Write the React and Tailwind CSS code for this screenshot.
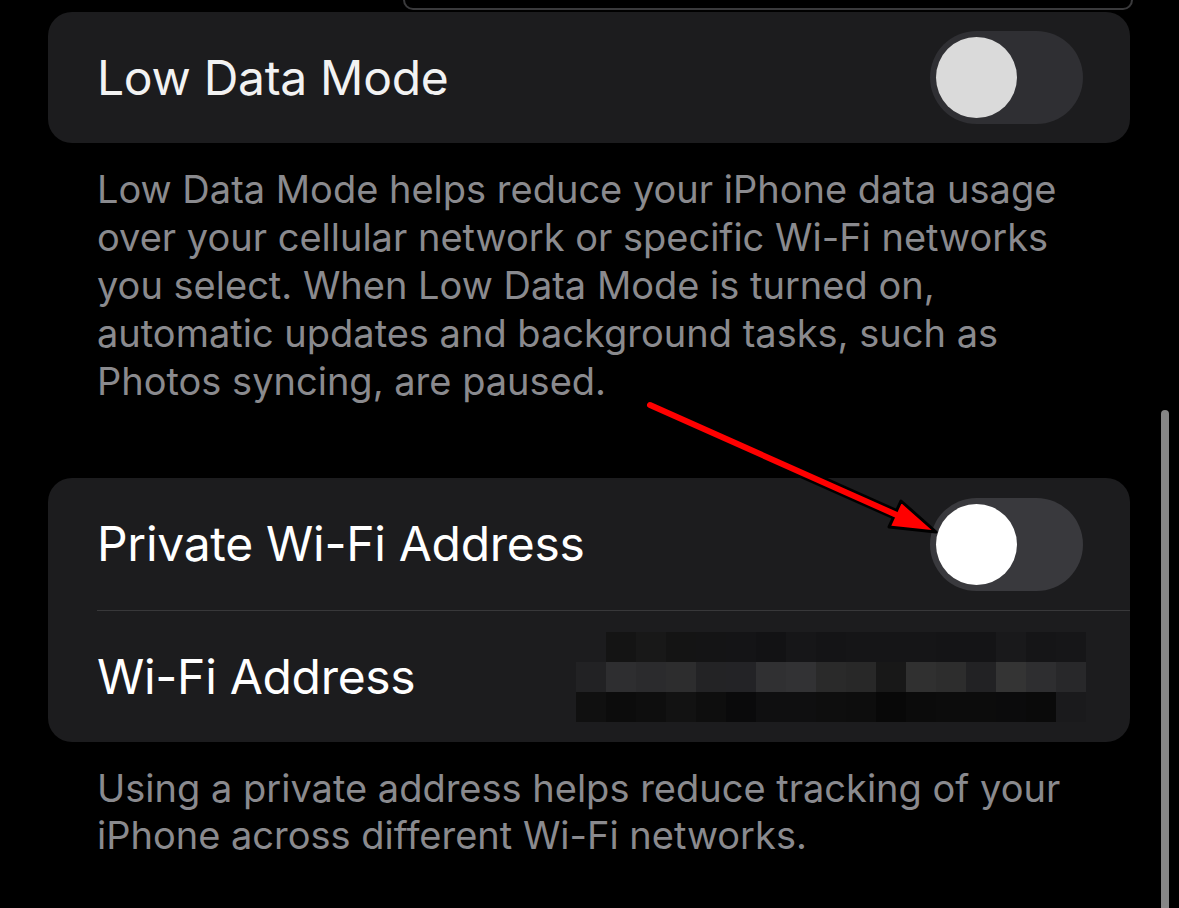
const blur = [
  ["#1c1c1e", "#141414", "#181818", "#141414", "#141415", "#141416", "#121214", "#161618", "#141416", "#151517", "#151517", "#151517", "#141416", "#141416", "#19191b", "#151517", "#161618"],
  ["#222224", "#2e2e30", "#2b2b2d", "#2d2d2e", "#232325", "#232326", "#303032", "#323234", "#2a2a2a", "#282828", "#181818", "#303030", "#2d2d2d", "#222224", "#343434", "#2e2e30", "#28282a"],
  ["#101010", "#0c0c0c", "#0e0e0e", "#121212", "#0e0e0e", "#0a0a0b", "#0f0f10", "#0f0f10", "#0e0e0e", "#0d0d0d", "#080808", "#0b0b0b", "#0c0c0c", "#0c0c0c", "#0b0b0c", "#0a0a0a", "#1a1a1c"],
];

function Toggle({ dim }) {
  return (
    <div className={`w-[153px] h-[93px] rounded-full p-[6px] flex items-center ${dim ? "bg-[#2f2f33]" : "bg-[#39393d]"}`}>
      <div className={`w-[81px] h-[81px] rounded-full ${dim ? "bg-[#dadada]" : "bg-white"}`} />
    </div>
  );
}

export default function App() {
  return (
    <div className="relative w-[1179px] h-[908px] overflow-hidden bg-black" style={{ fontFamily: "Inter, 'Noto Sans', sans-serif" }}>
      <div className="ml-[403px] w-[730px] h-[10px] border-x-2 border-b-2 border-[#3a3a3c] rounded-b-[22px]" />

      <div className="pl-[48px] pr-[49px] pt-[2px]">
        <div className="h-[131px] rounded-[24px] bg-[#1c1c1e] pl-[49px] pr-[47px] flex items-center justify-between">
          <span className="text-[48px] text-[#f2f2f2] tracking-[-0.3px]">Low Data Mode</span>
          <Toggle dim />
        </div>

        <p className="mt-[22px] pl-[49px] text-[38px] leading-[48px] text-[#8a8a8e] whitespace-nowrap">
          Low Data Mode helps reduce your iPhone data usage
          <br />
          over your cellular network or specific Wi-Fi networks
          <br />
          you select. When Low Data Mode is turned on,
          <br />
          automatic updates and background tasks, such as
          <br />
          Photos syncing, are paused.
        </p>

        <div className="mt-[73px] rounded-[24px] bg-[#1c1c1e]">
          <div className="h-[132px] pl-[49px] pr-[47px] flex items-center justify-between">
            <span className="text-[48px] text-white tracking-[-0.3px]">Private Wi-Fi Address</span>
            <Toggle />
          </div>
          <div className="ml-[49px] h-px bg-[#38383a]" />
          <div className="h-[131px] pl-[49px] pr-[44px] flex items-center justify-between">
            <span className="text-[48px] text-white tracking-[-0.3px]">Wi-Fi Address</span>
            <div className="grid grid-cols-[repeat(17,30px)]">
              {blur.flat().map((c, i) => (
                <div key={i} className="h-[30px]" style={{ backgroundColor: c }} />
              ))}
            </div>
          </div>
        </div>

        <p className="mt-[23px] pl-[49px] text-[38px] leading-[47px] text-[#8a8a8e] whitespace-nowrap">
          Using a private address helps reduce tracking of your
          <br />
          iPhone across different Wi-Fi networks.
        </p>
      </div>

      <div className="absolute left-[1161px] top-[410px] w-[8px] h-[520px] rounded-full bg-[#868686]" />

      <svg className="absolute inset-0 pointer-events-none" width="1179" height="908">
        <line x1="650" y1="405" x2="897" y2="515" stroke="#000" strokeWidth="11" strokeLinecap="round" />
        <polygon points="936,532 889,527 901,501" fill="#ff0000" stroke="#000" strokeWidth="3" strokeLinejoin="round" />
        <line x1="650" y1="405" x2="899" y2="516" stroke="#ff0000" strokeWidth="6" strokeLinecap="round" />
      </svg>
    </div>
  );
}
